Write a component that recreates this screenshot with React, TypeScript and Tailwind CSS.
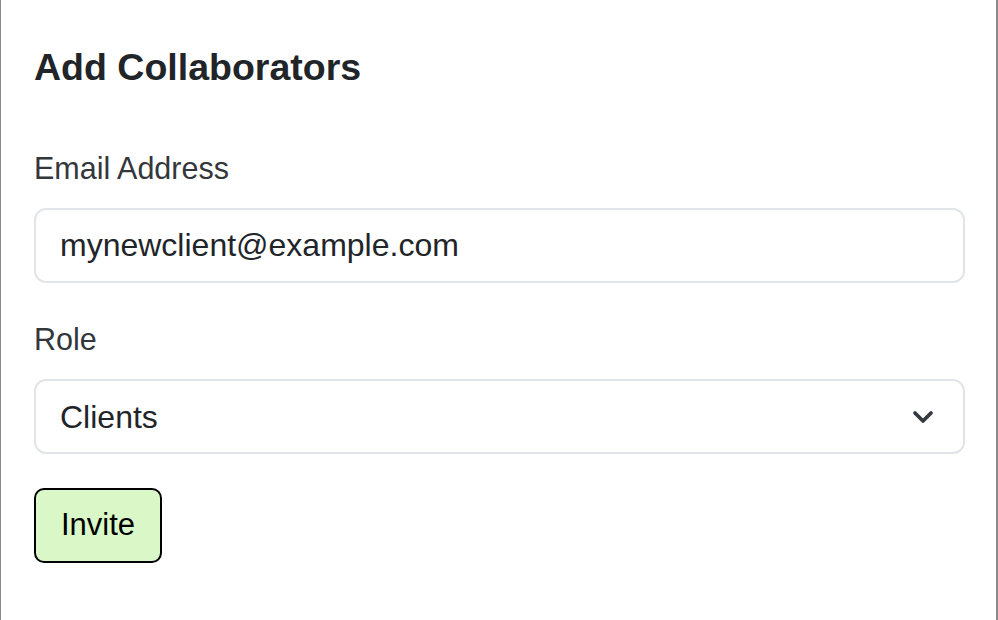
import { ChevronDown } from 'lucide-react';

export default function App() {
    return (
        <div className="w-[998px] h-[620px] bg-white overflow-hidden" style={{ fontFamily: '"Liberation Sans", Arial, sans-serif' }}>
            <div className="h-[640px] w-[998px] border-l border-r-2 border-[#8a8a8a] rounded-b-[12px] bg-white px-[33px] pt-[44px]">
                <h5 className="text-[37.5px] leading-[46px] font-bold text-[#212529]">Add Collaborators</h5>

                <div className="mt-[60px]">
                    <label className="block text-[30.5px] leading-[36px] font-light text-[#33373b]">Email Address</label>
                    <input
                        type="email"
                        defaultValue="mynewclient@example.com"
                        className="mt-[22px] block w-[931px] h-[75px] rounded-[12px] border-2 border-[#e1e4e8] px-[24px] text-[32px] text-[#212529] outline-none"
                    />
                </div>

                <div className="mt-[38px]">
                    <label className="block text-[30.5px] leading-[36px] font-light text-[#33373b]">Role</label>
                    <div className="mt-[22px] flex items-center justify-between w-[931px] h-[75px] rounded-[12px] border-2 border-[#e1e4e8] pl-[24px] pr-[24px] text-[32px] text-[#212529]">
                        <span>Clients</span>
                        <ChevronDown size={32} strokeWidth={2.8} className="text-[#343a40]" />
                    </div>
                </div>

                <button className="mt-[34px] w-[128px] h-[75px] rounded-[10px] border-2 border-black bg-[#d9f7c7] text-[31px] text-black">
                    Invite
                </button>
            </div>
        </div>
    );
}
